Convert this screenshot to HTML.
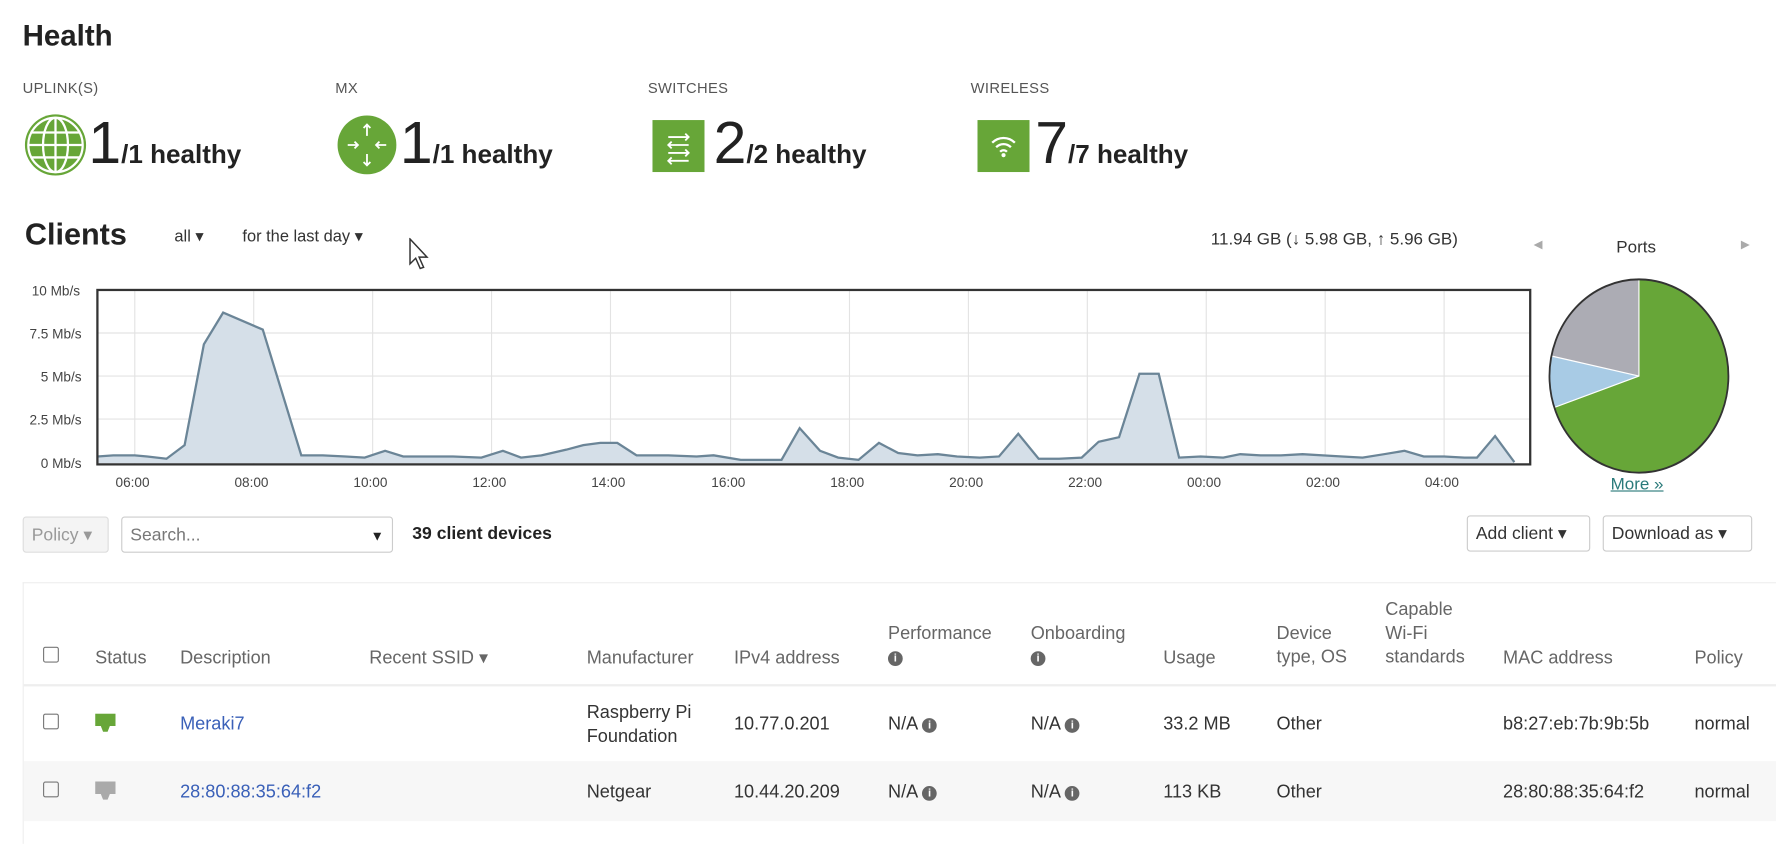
<!DOCTYPE html>
<html><head><meta charset="utf-8"><style>
html,body{margin:0;padding:0;background:#fff;overflow:hidden;width:1776px;height:838px}
#w{position:absolute;left:0;top:0;width:1568px;height:740px;transform:scale(1.13265);transform-origin:0 0;font-family:"Liberation Sans",sans-serif;color:#222}
.a{position:absolute;white-space:nowrap}
.lbl{font-size:13px;color:#555;letter-spacing:.3px}
.big{font-size:52px;font-weight:300;line-height:50px}
.h{font-size:22px;font-weight:bold}
.th{font-size:16px;color:#666;line-height:21px}
.td{font-size:16px;color:#333;line-height:21px}
.lk{color:#3a60b8}
.cb{width:12px;height:12px;border:1.5px solid #777;border-radius:2px;position:absolute}
.ax{font-size:12px;color:#444}
.btn{position:absolute;border:1px solid #ccc;border-radius:3px;font-size:15.5px;height:32px;line-height:32px;box-sizing:border-box;padding:0 7px;background:#fff}
.i{display:inline-block;width:13px;height:13px;border-radius:50%;background:#666;color:#fff;font-size:10px;line-height:13px;text-align:center;font-weight:bold;vertical-align:1px}
.hs{font-size:23px;font-weight:bold}
</style></head><body><div id="w">
<div class="a" style="left:20px;top:16px;font-size:26px;font-weight:bold">Health</div>
<div class="a lbl" style="left:20px;top:70px">UPLINK(S)</div>
<div class="a lbl" style="left:296px;top:70px">MX</div>
<div class="a lbl" style="left:572px;top:70px">SWITCHES</div>
<div class="a lbl" style="left:857px;top:70px">WIRELESS</div>
<svg class="a" style="left:21px;top:100px" width="56" height="56" viewBox="0 0 56 56"><circle cx="28" cy="28" r="27" fill="#67a638"/><g fill="none" stroke="#fff" stroke-width="2"><circle cx="28" cy="28" r="24"/><ellipse cx="28" cy="28" rx="11" ry="24"/><line x1="28" y1="4" x2="28" y2="52"/><line x1="4" y1="28" x2="52" y2="28"/><line x1="7" y1="17" x2="49" y2="17"/><line x1="7" y1="39" x2="49" y2="39"/></g></svg>
<div class="a big" style="left:78px;top:102px">1<span class="hs">/1 healthy</span></div>
<svg class="a" style="left:298px;top:102px" width="52" height="52" viewBox="0 0 52 52"><circle cx="26" cy="26" r="26" fill="#67a638"/><g stroke="#fff" stroke-width="1.6" fill="none"><path d="M26 8v10M23 11l3-3 3 3M26 44V34M23 41l3 3 3-3M9 26h9M15 23l3 3-3 3M43 26h-9M37 23l-3 3 3 3"/></g></svg>
<div class="a big" style="left:353px;top:102px">1<span class="hs">/1 healthy</span></div>
<svg class="a" style="left:576px;top:106px" width="46" height="46" viewBox="0 0 46 46"><rect width="46" height="46" fill="#67a638"/><g stroke="#fff" stroke-width="1.6" fill="none"><path d="M14 15h18M29 12l3 3-3 3M32 22H14M17 19l-3 3 3 3M14 29h18M29 26l3 3-3 3M32 36H14M17 33l-3 3 3 3"/></g></svg>
<div class="a big" style="left:630px;top:102px">2<span class="hs">/2 healthy</span></div>
<svg class="a" style="left:863px;top:106px" width="46" height="46" viewBox="0 0 46 46"><rect width="46" height="46" fill="#67a638"/><g stroke="#fff" stroke-width="2" fill="none"><path d="M13 20a14 14 0 0 1 20 0M16.5 24a9 9 0 0 1 13 0M20 28a4 4 0 0 1 6 0"/></g><circle cx="23" cy="31" r="1.8" fill="#fff"/></svg>
<div class="a big" style="left:914px;top:102px">7<span class="hs">/7 healthy</span></div>

<div class="a" style="left:22px;top:192px;font-size:27px;font-weight:bold">Clients</div>
<div class="a" style="left:154px;top:201px;font-size:14.5px;color:#333">all ▾</div>
<div class="a" style="left:214px;top:201px;font-size:14.5px;color:#333">for the last day ▾</div>
<svg class="a" style="left:360px;top:210px" width="20" height="30" viewBox="0 0 20 30"><path d="M2 1v22l5-5 4 9 3-1-4-9h7z" fill="#fff" stroke="#333" stroke-width="1.3"/></svg>
<div class="a" style="left:1069px;top:203px;font-size:15px;color:#333">11.94 GB (↓ 5.98 GB, ↑ 5.96 GB)</div>
<div class="a" style="left:1354px;top:211px;font-size:10px;color:#aaa">◀</div>
<div class="a" style="left:1537px;top:211px;font-size:10px;color:#aaa">▶</div>
<div class="a" style="left:1427px;top:210px;font-size:15px;color:#333">Ports</div>

<div class="a ax" style="left:28px;top:250px">10 Mb/s</div>
<div class="a ax" style="left:26px;top:288px">7.5 Mb/s</div>
<div class="a ax" style="left:36px;top:326px">5 Mb/s</div>
<div class="a ax" style="left:26px;top:364px">2.5 Mb/s</div>
<div class="a ax" style="left:36px;top:402px">0 Mb/s</div>
<svg class="a" style="left:0;top:0" width="1568" height="440">
<g stroke="#e3e3e3" stroke-width="1">
<line x1="86" y1="294" x2="1351" y2="294"/><line x1="86" y1="332" x2="1351" y2="332"/><line x1="86" y1="370" x2="1351" y2="370"/>
<line x1="119" y1="256" x2="119" y2="410"/><line x1="224" y1="256" x2="224" y2="410"/><line x1="329" y1="256" x2="329" y2="410"/><line x1="434" y1="256" x2="434" y2="410"/><line x1="539" y1="256" x2="539" y2="410"/><line x1="645" y1="256" x2="645" y2="410"/><line x1="750" y1="256" x2="750" y2="410"/><line x1="855" y1="256" x2="855" y2="410"/><line x1="960" y1="256" x2="960" y2="410"/><line x1="1065" y1="256" x2="1065" y2="410"/><line x1="1170" y1="256" x2="1170" y2="410"/><line x1="1275" y1="256" x2="1275" y2="410"/>
</g>
<polygon fill="#d5dfe8" stroke="none" points="86,409 86,403 100,402 119,402 130,403 147,405 163,393 180,304 197,276 232,291 266,402 285,402 305,403 322,404 340,398 356,403 380,403 400,403 425,404 444,398 460,404 478,402 500,397 515,393 530,391 545,391 562,402 590,402 615,403 630,402 654,406 672,406 690,406 706,378 724,398 740,404 758,406 776,391 793,400 810,402 828,401 845,403 865,404 882,403 899,383 917,405 935,405 955,404 970,390 988,386 1006,330 1023,330 1041,404 1060,403 1080,404 1095,401 1113,402 1131,402 1150,401 1168,402 1185,403 1203,404 1222,401 1240,398 1257,403 1275,403 1293,404 1304,404 1320,385 1337,408 1337,409"/>
<polyline fill="none" stroke="#6b8597" stroke-width="2" points="86,403 100,402 119,402 130,403 147,405 163,393 180,304 197,276 232,291 266,402 285,402 305,403 322,404 340,398 356,403 380,403 400,403 425,404 444,398 460,404 478,402 500,397 515,393 530,391 545,391 562,402 590,402 615,403 630,402 654,406 672,406 690,406 706,378 724,398 740,404 758,406 776,391 793,400 810,402 828,401 845,403 865,404 882,403 899,383 917,405 935,405 955,404 970,390 988,386 1006,330 1023,330 1041,404 1060,403 1080,404 1095,401 1113,402 1131,402 1150,401 1168,402 1185,403 1203,404 1222,401 1240,398 1257,403 1275,403 1293,404 1304,404 1320,385 1337,408"/>
<rect x="86" y="256" width="1265" height="154" fill="none" stroke="#333" stroke-width="2"/>
<g transform="translate(1447,332) scale(1,1.08)">
<path d="M0 0L0 -79A79 79 0 1 1 -74.7 25.7Z" fill="#67a638"/>
<path d="M0 0L-74.7 25.7A79 79 0 0 1 -77.3 -16.4Z" fill="#a8cbe5"/>
<path d="M0 0L-77.3 -16.4A79 79 0 0 1 0 -79Z" fill="#acacb4"/>
<path d="M0 -79V0L-74.7 25.7M0 0L-77.3 -16.4" stroke="#fff" stroke-width="1" fill="none"/>
<circle r="79" fill="none" stroke="#333" stroke-width="1.6"/>
</g>
</svg>
<div class="a ax" style="left:102px;top:419px">06:00</div>
<div class="a ax" style="left:207px;top:419px">08:00</div>
<div class="a ax" style="left:312px;top:419px">10:00</div>
<div class="a ax" style="left:417px;top:419px">12:00</div>
<div class="a ax" style="left:522px;top:419px">14:00</div>
<div class="a ax" style="left:628px;top:419px">16:00</div>
<div class="a ax" style="left:733px;top:419px">18:00</div>
<div class="a ax" style="left:838px;top:419px">20:00</div>
<div class="a ax" style="left:943px;top:419px">22:00</div>
<div class="a ax" style="left:1048px;top:419px">00:00</div>
<div class="a ax" style="left:1153px;top:419px">02:00</div>
<div class="a ax" style="left:1258px;top:419px">04:00</div>
<div class="a" style="left:1422px;top:419px;font-size:15px;color:#2a7a7a;text-decoration:underline">More »</div>

<div class="btn" style="left:20px;top:456px;width:76px;background:#f4f4f4;color:#999;border-color:#ddd">Policy ▾</div>
<div class="btn" style="left:107px;top:456px;width:240px;color:#777">Search...<span style="position:absolute;right:7px;color:#222;font-size:12px">▼</span></div>
<div class="a" style="left:364px;top:463px;font-size:15.5px;font-weight:bold">39 client devices</div>
<div class="btn" style="left:1295px;top:455px;width:109px;color:#333">Add client ▾</div>
<div class="btn" style="left:1415px;top:455px;width:132px;color:#333">Download as ▾</div>

<div class="a" style="left:20px;top:514px;width:1548px;height:230px;border-top:1px solid #eee;border-left:1px solid #eee"></div>
<div class="a" style="left:21px;top:604px;width:1547px;height:2px;background:#eee"></div>
<div class="a" style="left:21px;top:672px;width:1547px;height:53px;background:#f7f7f7"></div>
<div class="cb" style="left:38px;top:571px"></div>
<div class="a th" style="left:84px;top:571px">Status</div>
<div class="a th" style="left:159px;top:571px">Description</div>
<div class="a th" style="left:326px;top:571px">Recent SSID ▾</div>
<div class="a th" style="left:518px;top:571px">Manufacturer</div>
<div class="a th" style="left:648px;top:571px">IPv4 address</div>
<div class="a th" style="left:784px;top:549px">Performance<br><span class="i">i</span></div>
<div class="a th" style="left:910px;top:549px">Onboarding<br><span class="i">i</span></div>
<div class="a th" style="left:1027px;top:571px">Usage</div>
<div class="a th" style="left:1127px;top:549px">Device<br>type, OS</div>
<div class="a th" style="left:1223px;top:528px">Capable<br>Wi-Fi<br>standards</div>
<div class="a th" style="left:1327px;top:571px">MAC address</div>
<div class="a th" style="left:1496px;top:571px">Policy</div>

<div class="cb" style="left:38px;top:630px"></div>
<svg class="a" style="left:84px;top:630px" width="18" height="18" viewBox="0 0 18 18"><path d="M0 0h18v11h-5l-2 5H7L5 11H0z" fill="#67a638"/></svg>
<div class="a td lk" style="left:159px;top:629px">Meraki7</div>
<div class="a td" style="left:518px;top:619px">Raspberry Pi<br>Foundation</div>
<div class="a td" style="left:648px;top:629px">10.77.0.201</div>
<div class="a td" style="left:784px;top:629px">N/A <span class="i">i</span></div>
<div class="a td" style="left:910px;top:629px">N/A <span class="i">i</span></div>
<div class="a td" style="left:1027px;top:629px">33.2 MB</div>
<div class="a td" style="left:1127px;top:629px">Other</div>
<div class="a td" style="left:1327px;top:629px">b8:27:eb:7b:9b:5b</div>
<div class="a td" style="left:1496px;top:629px">normal</div>

<div class="cb" style="left:38px;top:690px"></div>
<svg class="a" style="left:84px;top:690px" width="18" height="18" viewBox="0 0 18 18"><path d="M0 0h18v11h-5l-2 5H7L5 11H0z" fill="#aaa"/></svg>
<div class="a td lk" style="left:159px;top:689px">28:80:88:35:64:f2</div>
<div class="a td" style="left:518px;top:689px">Netgear</div>
<div class="a td" style="left:648px;top:689px">10.44.20.209</div>
<div class="a td" style="left:784px;top:689px">N/A <span class="i">i</span></div>
<div class="a td" style="left:910px;top:689px">N/A <span class="i">i</span></div>
<div class="a td" style="left:1027px;top:689px">113 KB</div>
<div class="a td" style="left:1127px;top:689px">Other</div>
<div class="a td" style="left:1327px;top:689px">28:80:88:35:64:f2</div>
<div class="a td" style="left:1496px;top:689px">normal</div>
</div></body></html>
